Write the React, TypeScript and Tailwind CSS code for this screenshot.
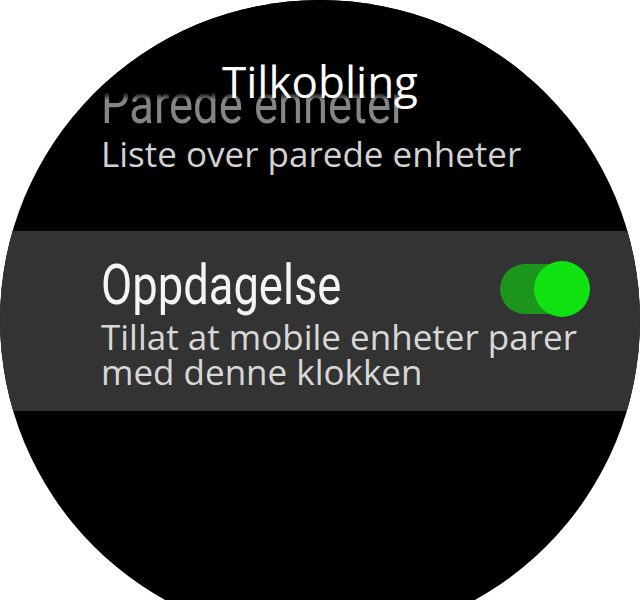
import React from "react";

const condensed = "font-['Roboto',sans-serif]";
const sans = "font-['Open_Sans','Noto_Sans',sans-serif]";

function Toggle() {
  return (
    <div className="mt-[8px] flex h-[50px] w-[85px] shrink-0 items-center justify-end rounded-full bg-[#1b951b]">
      <div className="-mr-[5px] h-[56px] w-[56px] shrink-0 rounded-full bg-[#11e211]" />
    </div>
  );
}

export default function App() {
  return (
    <div className="h-[600px] w-[640px] overflow-hidden bg-white">
      <div className="relative h-[640px] w-[640px] overflow-hidden rounded-full bg-black">
        {/* scrolled list */}
        <div className="flex flex-col pt-[76px]">
          <div className="flex flex-col pl-[101px] pr-[55px]">
            <div
              className={`${condensed} h-[56px] origin-left scale-x-[0.81] whitespace-nowrap text-[56px] leading-[56px] text-[#858585]`}
            >
              Parede enheter
            </div>
            <div
              className={`${sans} mt-[4px] text-[35px] leading-[35px] text-[#d2d2d2]`}
            >
              Liste over parede enheter
            </div>
          </div>
          <div className="mt-[60px] flex flex-col bg-[#333333] pb-[22px] pl-[101px] pr-[55px] pt-[25px]">
            <div className="flex items-center justify-between">
              <div
                className={`${condensed} h-[56px] origin-left scale-x-[0.81] whitespace-nowrap text-[56px] leading-[56px] text-[#f4f4f4]`}
              >
                Oppdagelse
              </div>
              <Toggle />
            </div>
            <div
              className={`${sans} mt-[5px] text-[35px] leading-[35px] text-[#d8d8d8]`}
            >
              Tillat at mobile enheter parer
              <br />
              med denne klokken
            </div>
          </div>
        </div>
        {/* header over the list */}
        <div className="absolute inset-x-0 top-0 h-[100px] bg-[linear-gradient(to_bottom,#000_0%,#000_92%,transparent_100%)]">
          <div
            className={`${sans} pt-[60px] text-center text-[44px] leading-[42px] text-white`}
          >
            Tilkobling
          </div>
        </div>
      </div>
    </div>
  );
}
